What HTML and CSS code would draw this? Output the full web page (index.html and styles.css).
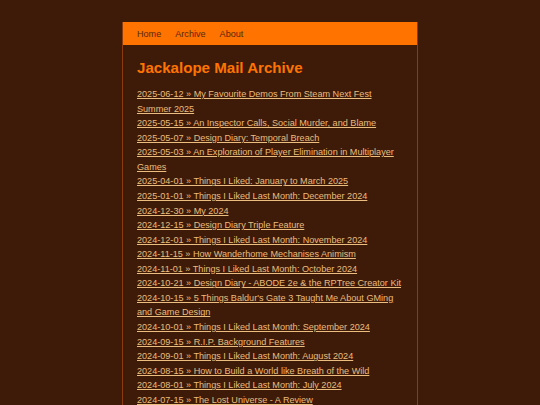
FILE: index.html
```html
<!DOCTYPE html>
<html>
<head>
<meta charset="utf-8">
<link rel="stylesheet" href="styles.css">
</head>
<body>
<div class="page">
  <nav class="nav">
    <a href="#">Home</a>
    <a href="#">Archive</a>
    <a href="#">About</a>
  </nav>
  <main class="content">
    <h1 class="title">Jackalope Mail Archive</h1>
    <ul class="posts">
      <li><a href="#">2025-06-12 » My Favourite Demos From Steam Next Fest Summer 2025</a></li>
      <li><a href="#">2025-05-15 » An Inspector Calls, Social Murder, and Blame</a></li>
      <li><a href="#">2025-05-07 » Design Diary: Temporal Breach</a></li>
      <li><a href="#">2025-05-03 » An Exploration of Player Elimination in Multiplayer Games</a></li>
      <li><a href="#">2025-04-01 » Things I Liked: January to March 2025</a></li>
      <li><a href="#">2025-01-01 » Things I Liked Last Month: December 2024</a></li>
      <li><a href="#">2024-12-30 » My 2024</a></li>
      <li><a href="#">2024-12-15 » Design Diary Triple Feature</a></li>
      <li><a href="#">2024-12-01 » Things I Liked Last Month: November 2024</a></li>
      <li><a href="#">2024-11-15 » How Wanderhome Mechanises Animism</a></li>
      <li><a href="#">2024-11-01 » Things I Liked Last Month: October 2024</a></li>
      <li><a href="#">2024-10-21 » Design Diary - ABODE 2e &amp; the RPTree Creator Kit</a></li>
      <li><a href="#">2024-10-15 » 5 Things Baldur's Gate 3 Taught Me About GMing and Game Design</a></li>
      <li><a href="#">2024-10-01 » Things I Liked Last Month: September 2024</a></li>
      <li><a href="#">2024-09-15 » R.I.P. Background Features</a></li>
      <li><a href="#">2024-09-01 » Things I Liked Last Month: August 2024</a></li>
      <li><a href="#">2024-08-15 » How to Build a World like Breath of the Wild</a></li>
      <li><a href="#">2024-08-01 » Things I Liked Last Month: July 2024</a></li>
      <li><a href="#">2024-07-15 » The Lost Universe - A Review</a></li>
    </ul>
  </main>
</div>
</body>
</html>
```
FILE: styles.css
```css
html, body {
  margin: 0;
  padding: 0;
  background: #3d1b08;
}
body {
  font-family: "Liberation Sans", Arial, sans-serif;
  font-size: 9.1px;
  line-height: 14.56px;
}
.page {
  width: 294px;
  margin: 22px auto 0;
  border-left: 1px solid #8c3c0c;
  border-right: 1px solid #8c3c0c;
  min-height: 400px;
}
.nav {
  background: #ff7300;
  height: 23px;
  display: flex;
  align-items: center;
  gap: 14px;
  padding-left: 14px;
  padding-top: 1px;
  box-sizing: border-box;
}
.nav a {
  color: #5a2608;
  text-decoration: none;
}
.content {
  padding: 0 14px;
}
.title {
  color: #ff7300;
  font-size: 15.1px;
  line-height: 20px;
  font-weight: bold;
  margin: 13px 0 9px;
}
.posts {
  list-style: none;
  margin: 0;
  padding: 0;
}
.posts a {
  color: #ebbd7e;
  text-decoration: underline;
}
```
